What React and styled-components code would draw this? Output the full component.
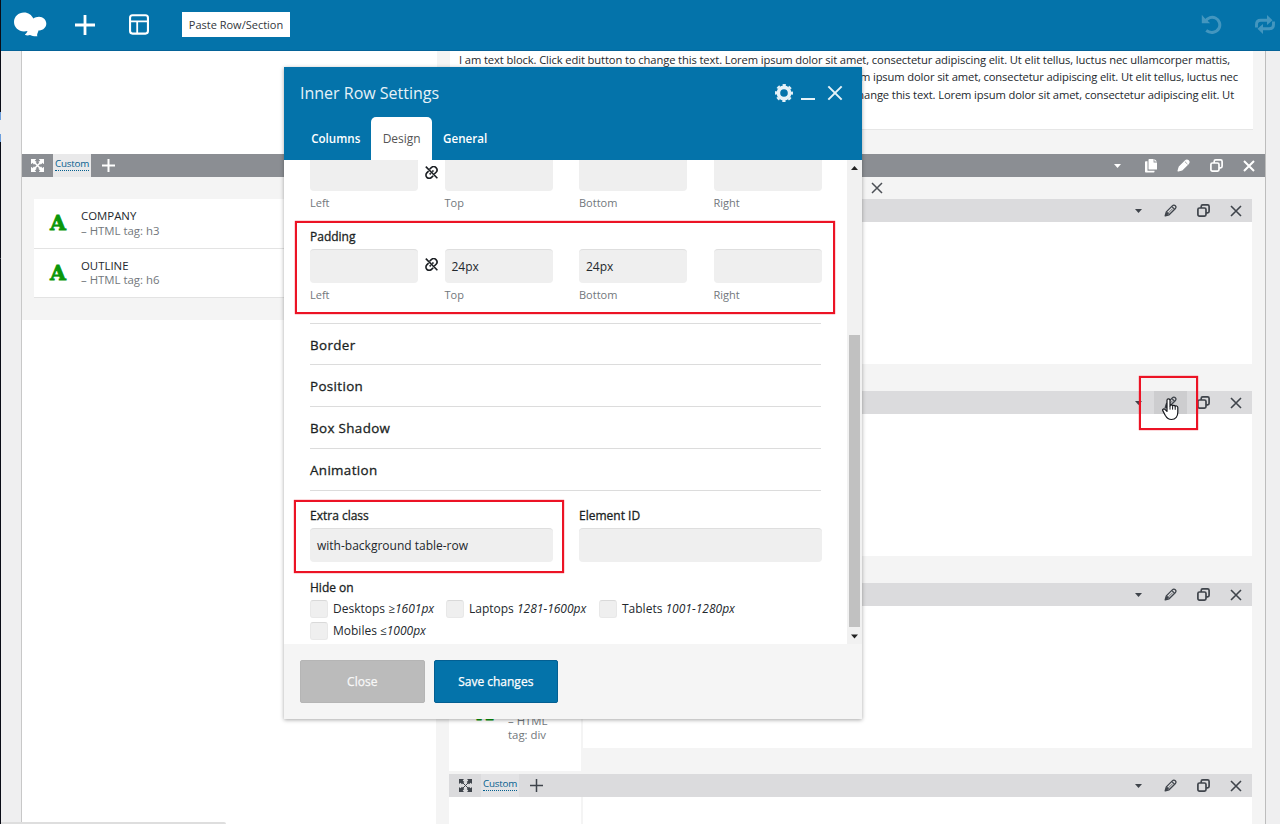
import React from "react";
import styled, { createGlobalStyle, css } from "styled-components";

const BLUE = "#0473aa";
const RED = "#ec1325";

const GlobalStyle = createGlobalStyle`
  * { box-sizing: border-box; }
  body { margin: 0; background: #fff; font-family: "Open Sans", "Noto Sans", sans-serif; font-size: 12px; color: #23282d; }
  svg { display: block; flex: none; }
`;

const Page = styled.div`
  position: relative;
  display: flex;
  width: 1280px;
  height: 824px;
  overflow: hidden;
  background: #efeff0;
`;
const ScreenEdge = styled.div`
  width: 1px;
  flex: none;
  background: linear-gradient(
    #0a0c16 0 112px, #6c9fdd 112px 120px, #efeff0 120px 134px,
    #6c9fdd 134px 142px, #0a0c16 142px 258px, #4a4e58 258px 259px, #0a0c16 259px
  );
`;
const Editor = styled.div`
  flex: 1;
  min-width: 0;
  display: flex;
  flex-direction: column;
`;
const TopBar = styled.header`
  height: 51px;
  flex: none;
  display: flex;
  align-items: center;
  background: ${BLUE};
  border-bottom: 1px solid #056398;
  padding: 0 0 1px 13px;
  color: #fff;
`;
const PasteButton = styled.button`
  width: 108px;
  height: 25px;
  margin: 0 auto 0 26px;
  padding: 0;
  border: 0;
  background: #fff;
  color: #32373c;
  font: 11px "Open Sans", sans-serif;
  white-space: nowrap;
`;
const HistoryIcons = styled.div`
  display: flex;
  align-items: center;
  gap: 33px;
  margin-right: 5px;
  opacity: 0.25;
`;
const Canvas = styled.main`
  flex: 1;
  min-height: 0;
  margin: 0 14px 0 20px;
  border-left: 1px solid #c8c8c8;
  border-right: 1px solid #bdbdbd;
  background: #f4f4f4;
`;
const TextSection = styled.section`
  display: flex;
  height: 103px;
`;
const BlankColumn = styled.div`
  width: 415px;
  background: #fff;
`;
const TextBlock = styled.div`
  width: 803px;
  height: 79px;
  margin-left: 13px;
  background: #fff;
  border-bottom: 1px solid #e6e6e6;
`;
const TextLine = styled.div`
  display: flex;
  width: ${(p) => p.$w}px;
  height: 17.4px;
  line-height: 17.4px;
  margin-left: 9px;
  white-space: nowrap;
  justify-content: ${(p) => (p.$end ? "flex-end" : "flex-start")};
  font-size: 11.2px;
  letter-spacing: ${(p) => (p.$end ? -0.13 : -0.11)}px;
`;
const barTones = {
  dark: css`background: #8b8e93; color: #fff;`,
  light: css`background: #dbdbdd; color: #3f444b;`,
};
const RowBar = styled.div`
  display: flex;
  height: 23px;
  flex: none;
  ${(p) => barTones[p.$tone]}
`;
const BarCell = styled.div`
  width: ${(p) => p.$w || 33}px;
  display: flex;
  align-items: center;
  justify-content: center;
`;
const CaretCell = styled(BarCell)`
  padding-left: 1px;
`;
const MinimizeCell = styled(BarCell)`
  width: 34px;
  padding-right: 4px;
`;
const HoverCell = styled(BarCell)`
  background: #cdcdcf;
`;
const CustomCell = styled(BarCell)`
  width: 38px;
  background: ${(p) => (p.$light ? "#e3e3e5" : "#e9e9ea")};
  padding-bottom: 3px;
`;
const CustomLink = styled.span`
  font-size: 9.8px;
  line-height: 12px;
  letter-spacing: -0.2px;
  color: #04608f;
  border-bottom: 1px dotted #04608f;
`;
const Spacer = styled.div`
  flex: 1;
`;
const Columns = styled.div`
  display: flex;
  height: 647px;
`;
const LeftColumn = styled.div`
  width: 415px;
  background: #fff;
`;
const ElementList = styled.div`
  height: 143px;
  padding: 22px 12px 0;
  background: #f4f4f4;
`;
const ElementCard = styled.div`
  display: flex;
  height: 49.5px;
  padding: 10px 0 0 15px;
  background: #fff;
  border-bottom: 1px solid #e3e3e3;
`;
const LetterIcon = styled.span`
  width: 32px;
  padding-left: 1px;
  font: bold 20.5px/29px "DejaVu Serif", serif;
  color: #0a970a;
  -webkit-text-stroke: 0.8px #0a970a;
`;
const ElementText = styled.div`
  font-size: 11.4px;
  line-height: 14.5px;
`;
const Muted = styled.div`
  color: #72777c;
`;
const RightColumn = styled.div`
  width: 829px;
  padding: 0 13px;
`;
const ColumnControls = styled.div`
  height: 22px;
  padding: 4.5px 0 0 422px;
  color: #4c5056;
`;
const InnerRow = styled.div`
  height: ${(p) => p.$h}px;
  margin-bottom: ${(p) => p.$gap}px;
  display: flex;
  flex-direction: column;
`;
const InnerBody = styled.div`
  flex: 1;
  display: flex;
  align-items: flex-start;
  gap: 2px;
`;
const InnerCell = styled.div`
  width: ${(p) => p.$w}px;
  height: ${(p) => p.$h}px;
  background: #fff;
`;
const SmallElement = styled.div`
  display: flex;
  padding: 93px 0 0 27px;
`;

const Modal = styled.div`
  position: absolute;
  left: 284px;
  top: 67px;
  width: 578px;
  height: 652px;
  display: flex;
  flex-direction: column;
  background: #fff;
  box-shadow: 0 1px 4px rgba(0, 0, 0, 0.35);
`;
const ModalHeader = styled.div`
  height: 93px;
  flex: none;
  display: flex;
  flex-direction: column;
  justify-content: space-between;
  background: ${BLUE};
  color: #fff;
`;
const TitleRow = styled.div`
  display: flex;
  align-items: center;
  height: 50px;
  padding: 1px 19px 0 16px;
  color: #e6f2f8;
`;
const Title = styled.h2`
  flex: 1;
  margin: 0;
  font-size: 16px;
  font-weight: 400;
`;
const Tabs = styled.div`
  display: flex;
  height: 43px;
  padding-left: 16px;
`;
const Tab = styled.div`
  padding: 0 11.2px;
  line-height: 43px;
  font-size: 11.6px;
  font-weight: 600;
  ${(p) => p.$active && css`
    background: #fff;
    color: #555;
    font-size: 12px;
    font-weight: 400;
    border-radius: 5px 5px 0 0;
  `}
`;
const ModalBody = styled.div`
  flex: none;
  height: 484px;
  display: flex;
  overflow: hidden;
`;
const Form = styled.div`
  width: 563px;
  padding: 0 26px;
  margin-top: -3.5px;
`;
const SideGrid = styled.div`
  display: grid;
  grid-template-columns: 108px 26.5px 108px 26.5px 108px 26.5px 108px;
`;
const Side = styled.label`
  grid-column: ${(p) => p.$col};
  grid-row: 1;
  display: flex;
  flex-direction: column;
`;
const LinkCell = styled.div`
  grid-column: 2;
  grid-row: 1;
  padding: 9px 0 0 7px;
`;
const Field = styled.div`
  height: 34.5px;
  line-height: 34.5px;
  padding-left: 7px;
  background: #efefef;
  border-top: 1px solid #dedede;
  border-radius: 4px;
  white-space: nowrap;
`;
const Hint = styled.span`
  margin-top: 4px;
  font-size: 11px;
  line-height: 16px;
  color: #72777c;
`;
const Label = styled.div`
  height: 20px;
  line-height: 16px;
  color: #1b1f23;
  -webkit-text-stroke: 0.3px #1b1f23;
`;
const PaddingGroup = styled.div`
  margin-top: 17.5px;
  padding-bottom: 19.5px;
`;
const Accordion = styled.div`
  height: 41.8px;
  border-top: 1px solid #dcdcdc;
  font-size: 13.4px;
  line-height: 42px;
  letter-spacing: 0.35px;
  color: #1b1f23;
  -webkit-text-stroke: 0.3px #1b1f23;
`;
const TwoFields = styled.div`
  display: grid;
  grid-template-columns: 243px 242.5px;
  gap: 26px;
  border-top: 1px solid #dcdcdc;
  padding-top: 17px;
`;
const HideOn = styled.div`
  margin-top: 18px;
`;
const Checks = styled.div`
  display: flex;
  flex-wrap: wrap;
  margin-top: -2px;
`;
const Check = styled.label`
  display: flex;
  align-items: center;
  height: 22px;
  width: ${(p) => p.$w}px;
  line-height: 18px;
  white-space: pre;
`;
const Box = styled.span`
  width: 18px;
  height: 18px;
  margin-right: 5px;
  border-radius: 3px;
  background: #efefef;
  border: 1px solid #e8e8e8;
  border-top-color: #d9d9d9;
`;
const Scrollbar = styled.div`
  width: 15px;
  display: flex;
  flex-direction: column;
  align-items: center;
  background: #f1f1f1;
`;
const Thumb = styled.div`
  width: 11.5px;
  height: 292px;
  margin: 162px 0 7px;
  background: #c1c1c1;
`;
const ModalFooter = styled.div`
  flex: 1;
  display: flex;
  gap: 9px;
  padding: 16px;
  background: #f5f5f5;
`;
const Button = styled.button`
  width: 124.5px;
  height: 43px;
  padding: 0;
  border: 1px solid ${(p) => (p.$primary ? "#035f92" : "#b5b5b5")};
  border-radius: 2px;
  background: ${(p) => (p.$primary ? BLUE : "#bbb")};
  color: ${(p) => (p.$primary ? "#fff" : "#f8f8f8")};
  font: 12px "Open Sans", sans-serif;
  -webkit-text-stroke: 0.25px currentColor;
`;
const Highlight = styled.div`
  position: absolute;
  left: ${(p) => p.$x}px;
  top: ${(p) => p.$y}px;
  width: ${(p) => p.$w}px;
  height: ${(p) => p.$h}px;
  border: 2px solid ${RED};
  box-shadow: 0 0 1px ${RED};
`;
const Pointer = styled.svg`
  position: absolute;
  left: 1162px;
  top: 398px;
`;
const StatusEdge = styled.div`
  position: absolute;
  left: 1px;
  bottom: 0;
  width: 225px;
  height: 2px;
  background: #dedede;
  border-radius: 0 2px 0 0;
`;

const Logo = () => (
  <svg width="34" height="26" viewBox="0 0 34 26" fill="currentColor">
    <path d="M10 .5C4.500.5 0 4.600 0 10c0 5.300 4.500 9.400 10 9.400 1.400 0 2.600-.2 3.500-.5-.6 1.600-1.700 3-2.700 3.800 1.700 1 3.600.8 5.200.4 1.800.8 4.300 1.400 7.400 1.200-.5-1.200-.3-2 .2-3.300.5-1 .8-1.700.8-2.600 4.400.5 7.900-2.700 7.900-6.800 0-4-3.200-6.900-7.300-6.900-2.100 0-4.200.7-5.700 1.900C17.800 3 14.300.5 10 .5Z" />
  </svg>
);
const Plus = ({ size = 12, w = 1.6 }) => (
  <svg width={size} height={size} viewBox={`0 0 ${size} ${size}`} stroke="currentColor" strokeWidth={w}>
    <path d={`M${size / 2} 0V${size}M0 ${size / 2}H${size}`} />
  </svg>
);
const Cross = ({ size = 12, w = 1.6 }) => (
  <svg width={size} height={size} viewBox="0 0 12 12" stroke="currentColor" strokeWidth={w} fill="none">
    <path d="M1 1 11 11M11 1 1 11" />
  </svg>
);
const Template = () => (
  <svg width="20" height="21" viewBox="0 0 20 21" fill="none" stroke="currentColor" strokeWidth="2.1">
    <rect x="1.050" y="1.200" width="17.900" height="18.400" rx="2.500" />
    <path d="M1 7.400H19M8.200 7.400V19.500" strokeWidth="1.800" />
  </svg>
);
const Undo = () => (
  <svg width="21" height="21" viewBox="0 0 21 21" fill="none" stroke="currentColor" strokeWidth="3">
    <path d="M4.200 7.500C6.500 3.400 11 2.300 14.500 4c3.800 1.900 5.400 6.600 3.500 10.300-2.200 4.200-8.200 5.500-12.800 2.200" />
    <path d="M.8.800V9.200H9.200L6 6.200 3.500 4Z" fill="currentColor" stroke="none" />
  </svg>
);
const Redo = () => (
  <svg width="20" height="19" viewBox="0 0 20 19" fill="none" stroke="currentColor" strokeWidth="2.900">
    <path d="M1.500 12.500V9.500Q1.500 5.200 5.700 5.200H13M18.500 6.500V9.500Q18.500 13.800 14.300 13.800H7" />
    <path d="M12 0 17.500 5.200 12 10ZM8 9 2.500 13.800 8 19Z" fill="currentColor" stroke="none" />
  </svg>
);
const Caret = () => (
  <svg width="7" height="4" viewBox="0 0 7 4" fill="currentColor"><path d="M0 0H7L3.500 4Z" /></svg>
);
const Pencil = ({ filled }) => (
  <svg width="13" height="13" viewBox="0 0 13 13" fill="none" stroke="currentColor" strokeWidth="1.300" strokeLinejoin="round">
    <path d="M1.200 11.800 2.300 7.900 8.300 1.900Q9.900.3 11.300 1.700T11.200 4.800L5.100 10.800Z" fill={filled ? "currentColor" : "none"} />
    <path d="M3 7.600 5.300 10 3.200 11 1.200 11.800 2 9.200Z" fill="currentColor" stroke="none" />
    <path d="M7.900 2.600 10.500 5.200" stroke={filled ? "#8b8e93" : "currentColor"} strokeWidth={filled ? 0.8 : 1.2} />
    {!filled && <path d="M4.300 9 8.800 4.500" strokeWidth=".7" />}
  </svg>
);
const Clone = () => (
  <svg width="13" height="13" viewBox="0 0 13 13" fill="none" stroke="currentColor" strokeWidth="1.700">
    <rect x=".9" y="4" width="8.100" height="8.100" rx="1.500" />
    <path d="M4.200 4V2.400Q4.200.9 5.700.9H10.600Q12.100.9 12.100 2.400V7.300Q12.100 8.800 10.600 8.800H9" />
  </svg>
);
const Copy = () => (
  <svg width="12" height="14" viewBox="0 0 12 14" fill="currentColor">
    <path d="M4.200 0H8.600V3.400H12V10.600H4.200Q3.500 10.600 3.500 9.900V.7Q3.500 0 4.200 0Z" />
    <path d="M9.400 0 12 2.600H9.400ZM0 3Q0 2.200.8 2.200H2.500V11.700H9.500V12.700Q9.500 13.500 8.700 13.500H.8Q0 13.500 0 12.700Z" />
  </svg>
);
const Move = ({ bold }) => (
  <svg width="13" height="13" viewBox="0 0 13 13" fill="currentColor" stroke="currentColor">
    <path d="M0 0H5L3.700 1.400 5.300 3 3 5.300 1.400 3.700 0 5ZM13 0V5L11.600 3.700 10 5.300 7.700 3 9.300 1.400 8 0ZM0 13V8L1.400 9.300 3 7.700 5.300 10 3.700 11.600 5 13ZM13 13H8L9.300 11.600 7.700 10 10 7.700 11.600 9.300 13 8Z" stroke={bold ? "currentColor" : "none"} strokeWidth=".5" />
    <path d="M3 3 10 10M10 3 3 10" strokeWidth={bold ? 1.5 : 1} />
  </svg>
);
const Gear = () => (
  <svg width="18" height="18" viewBox="0 0 18 18" fill="none" stroke="currentColor">
    <circle cx="9" cy="9" r="5.600" strokeWidth="3.600" />
    <circle cx="9" cy="9" r="8" strokeWidth="2" strokeDasharray="3.300 2.983" strokeDashoffset="1.650" />
  </svg>
);
const Unlink = () => (
  <svg width="13" height="13" viewBox="0 0 13 13" fill="none" stroke="#1b1f23" strokeWidth="1.600">
    <path d="M.8.600 12.400 12.200" />
    <path d="M4.600 3.300 6.300 1.600C7.600.4 9.700.3 11 1.600 12.200 2.800 12.300 4.900 11.100 6.200L9.300 8" />
    <path d="M8.200 9.800 6.500 11.400C5.200 12.600 3.100 12.700 1.900 11.400.7 10.200.6 8.100 1.800 6.900L3.600 5.100" />
    <path d="M4.600 8.400 5.800 7.200M7.200 5.700 8.500 4.500" />
  </svg>
);

const InnerControls = ({ hover }) => (
  <>
    <Spacer />
    <CaretCell><Caret /></CaretCell>
    {hover ? <HoverCell><Pencil /></HoverCell> : <BarCell><Pencil /></BarCell>}
    <BarCell><Clone /></BarCell>
    <BarCell $w={32}><Cross /></BarCell>
  </>
);

const RowLead = ({ light }) => (
  <>
    <BarCell $w={light ? 32 : 31}><Move bold={!light} /></BarCell>
    <CustomCell $light={light}><CustomLink>Custom</CustomLink></CustomCell>
    <BarCell $w={35}><Plus size={13} w={light ? 1.5 : 2} /></BarCell>
  </>
);

const Sides = ({ top, bottom }) => (
  <SideGrid>
    <Side $col={1}><Field /><Hint>Left</Hint></Side>
    <LinkCell><Unlink /></LinkCell>
    <Side $col={3}><Field>{top}</Field><Hint>Top</Hint></Side>
    <Side $col={5}><Field>{bottom}</Field><Hint>Bottom</Hint></Side>
    <Side $col={7}><Field /><Hint>Right</Hint></Side>
  </SideGrid>
);

const cards = [
  { name: "COMPANY", tag: "– HTML tag: h3" },
  { name: "OUTLINE", tag: "– HTML tag: h6" },
];
const lorem = "I am text block. Click edit button to change this text. Lorem ipsum dolor sit amet, consectetur adipiscing elit. Ut";

export default function App() {
  return (
    <Page>
      <GlobalStyle />
      <ScreenEdge />
      <Editor>
        <TopBar>
          <Logo />
          <BarCell $w={74}><Plus size={20} w={2.8} /></BarCell>
          <BarCell $w={34}><Template /></BarCell>
          <PasteButton>Paste Row/Section</PasteButton>
          <HistoryIcons><Undo /><Redo /></HistoryIcons>
        </TopBar>
        <Canvas>
          <TextSection>
            <BlankColumn />
            <TextBlock>
              <TextLine $w={772}>{lorem} elit tellus, luctus nec ullamcorper mattis,</TextLine>
              <TextLine $w={779} $end>pulvinar dapibus leo. {lorem} elit tellus, luctus nec</TextLine>
              <TextLine $w={775} $end>ullamcorper mattis, pulvinar dapibus leo. {lorem}</TextLine>
            </TextBlock>
          </TextSection>
          <RowBar $tone="dark">
            <RowLead />
            <Spacer />
            <BarCell><Caret /></BarCell>
            <BarCell><Copy /></BarCell>
            <BarCell><Pencil filled /></BarCell>
            <BarCell><Clone /></BarCell>
            <BarCell $w={32}><Cross w={2} /></BarCell>
          </RowBar>
          <Columns>
            <LeftColumn>
              <ElementList>
                {cards.map((c) => (
                  <ElementCard key={c.name}>
                    <LetterIcon>A</LetterIcon>
                    <ElementText>{c.name}<Muted>{c.tag}</Muted></ElementText>
                  </ElementCard>
                ))}
              </ElementList>
            </LeftColumn>
            <RightColumn>
              <ColumnControls><Cross size={12} w={1.5} /></ColumnControls>
              <InnerRow $h={164.5} $gap={27.5}>
                <RowBar $tone="light"><InnerControls /></RowBar>
                <InnerBody><InnerCell $w={803} $h={141.5} /></InnerBody>
              </InnerRow>
              <InnerRow $h={164.5} $gap={27.5}>
                <RowBar $tone="light"><InnerControls hover /></RowBar>
                <InnerBody><InnerCell $w={803} $h={141.5} /></InnerBody>
              </InnerRow>
              <InnerRow $h={188.5} $gap={2.5}>
                <RowBar $tone="light"><InnerControls /></RowBar>
                <InnerBody>
                  <InnerCell $w={132} $h={165}>
                    <SmallElement>
                      <LetterIcon>A</LetterIcon>
                      <ElementText>TEXT<Muted>– HTML<br />tag: div</Muted></ElementText>
                    </SmallElement>
                  </InnerCell>
                  <InnerCell $w={669} $h={141.5} />
                </InnerBody>
              </InnerRow>
              <InnerRow $h={60} $gap={0}>
                <RowBar $tone="light"><RowLead light /><InnerControls /></RowBar>
                <InnerBody>
                  <InnerCell $w={132} $h={37} />
                  <InnerCell $w={669} $h={37} />
                </InnerBody>
              </InnerRow>
            </RightColumn>
          </Columns>
        </Canvas>
      </Editor>

      <Modal>
        <ModalHeader>
          <TitleRow>
            <Title>Inner Row Settings</Title>
            <Gear />
            <MinimizeCell>
              <svg width="14" height="18" viewBox="0 0 14 18"><path d="M0 15H14" stroke="currentColor" strokeWidth="2" /></svg>
            </MinimizeCell>
            <Cross size={16} w={1.5} />
          </TitleRow>
          <Tabs>
            <Tab>Columns</Tab>
            <Tab $active>Design</Tab>
            <Tab>General</Tab>
          </Tabs>
        </ModalHeader>
        <ModalBody>
          <Form>
            <Sides />
            <PaddingGroup>
              <Label>Padding</Label>
              <Sides top="24px" bottom="24px" />
            </PaddingGroup>
            {["Border", "Position", "Box Shadow", "Animation"].map((s) => <Accordion key={s}>{s}</Accordion>)}
            <TwoFields>
              <div><Label>Extra class</Label><Field>with-background table-row</Field></div>
              <div><Label>Element ID</Label><Field /></div>
            </TwoFields>
            <HideOn>
              <Label>Hide on</Label>
            </HideOn>
            <Checks>
              <Check $w={136}><Box />Desktops <i>≥1601px</i></Check>
              <Check $w={153}><Box />Laptops <i>1281-1600px</i></Check>
              <Check $w={160}><Box />Tablets <i>1001-1280px</i></Check>
              <Check $w={140}><Box />Mobiles <i>≤1000px</i></Check>
            </Checks>
          </Form>
          <Scrollbar>
            <svg width="7" height="13" viewBox="0 0 7 13"><path d="M0 10H7L3.500 6Z" fill="#222" /></svg>
            <Thumb />
            <svg width="7" height="5" viewBox="0 0 7 5"><path d="M0 .5H7L3.500 4.500Z" fill="#222" /></svg>
          </Scrollbar>
        </ModalBody>
        <ModalFooter>
          <Button>Close</Button>
          <Button $primary>Save changes</Button>
        </ModalFooter>
      </Modal>

      <Highlight $x={295} $y={221} $w={540} $h={93} />
      <Highlight $x={294} $y={500} $w={270} $h={73} />
      <Highlight $x={1139} $y={376} $w={59} $h={54} />
      <Pointer width="17" height="23" viewBox="0 0 17 23" fill="#fff" stroke="#15171c" strokeWidth="1.200" strokeLinejoin="round">
        <path d="M5 2.300C5 .3 8 .3 8 2.300V8c0-1.500 2.600-1.500 2.600.2.200-1.300 2.600-1.200 2.600.5.200-1.200 2.600-1 2.600.8v4.800c0 4-2.200 7.200-6.300 7.200-3.700 0-5-2-6.300-4.300L.9 12.900C.1 11.500 1.500 10.300 2.900 11.300L5 13.400Z" />
        <path d="M8 8v3.600M10.600 8.500v3.100M13.200 9v2.800" strokeWidth="1" />
      </Pointer>
      <StatusEdge />
    </Page>
  );
}
